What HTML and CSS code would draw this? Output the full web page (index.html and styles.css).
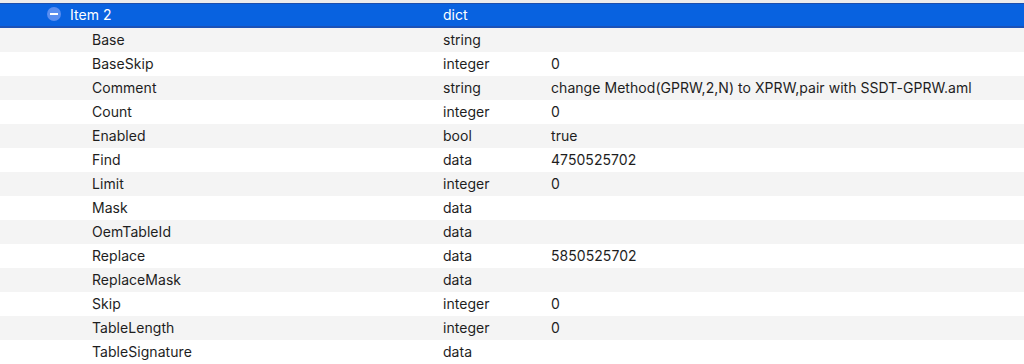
FILE: index.html
```html
<!DOCTYPE html>
<html lang="en">
<head>
    <meta charset="UTF-8">
    <title>Patch - Item 2</title>
    <link rel="stylesheet" href="styles.css">
</head>
<body>
    <div class="outline">
        <div class="row selected">
            <div class="key parent">
                <span class="toggle"></span>
                Item 2
            </div>
            <div class="type">dict</div>
            <div class="value"></div>
        </div>
        <div class="row"><div class="key">Base</div><div class="type">string</div><div class="value"></div></div>
        <div class="row"><div class="key">BaseSkip</div><div class="type">integer</div><div class="value">0</div></div>
        <div class="row"><div class="key">Comment</div><div class="type">string</div><div class="value">change Method(GPRW,2,N) to XPRW,pair with SSDT-GPRW.aml</div></div>
        <div class="row"><div class="key">Count</div><div class="type">integer</div><div class="value">0</div></div>
        <div class="row"><div class="key">Enabled</div><div class="type">bool</div><div class="value">true</div></div>
        <div class="row"><div class="key">Find</div><div class="type">data</div><div class="value">4750525702</div></div>
        <div class="row"><div class="key">Limit</div><div class="type">integer</div><div class="value">0</div></div>
        <div class="row"><div class="key">Mask</div><div class="type">data</div><div class="value"></div></div>
        <div class="row"><div class="key">OemTableId</div><div class="type">data</div><div class="value"></div></div>
        <div class="row"><div class="key">Replace</div><div class="type">data</div><div class="value">5850525702</div></div>
        <div class="row"><div class="key">ReplaceMask</div><div class="type">data</div><div class="value"></div></div>
        <div class="row"><div class="key">Skip</div><div class="type">integer</div><div class="value">0</div></div>
        <div class="row"><div class="key">TableLength</div><div class="type">integer</div><div class="value">0</div></div>
        <div class="row"><div class="key">TableSignature</div><div class="type">data</div><div class="value"></div></div>
    </div>
</body>
</html>
```

FILE: styles.css
```css
* {
    margin: 0;
    padding: 0;
    box-sizing: border-box;
}

body {
    font-family: 'Inter', 'Liberation Sans', sans-serif;
    font-size: 14px;
    letter-spacing: 0.05px;
    color: #1e1e1e;
    background: #ffffff;
    overflow: hidden;
}

.outline {
    border-top: 3px solid #ececec;
}

.row {
    display: grid;
    grid-template-columns: 443px 108px 1fr;
    align-items: center;
    height: 24px;
}

.row > div {
    padding-bottom: 2px;
}

.row:nth-child(even) {
    background: #f4f4f4;
}

.key {
    padding-left: 92px;
}

.key.parent {
    display: flex;
    align-items: center;
    gap: 9px;
    padding-left: 47px;
}

.selected {
    height: 25px;
    background: #0862e0;
    color: #ffffff;
    border-top: 1px solid #1c4fae;
    border-bottom: 2px solid #1b52b8;
}

.toggle {
    position: relative;
    width: 14px;
    height: 14px;
    border-radius: 50%;
    background: #5a8ef0;
}

.toggle::after {
    content: '';
    position: absolute;
    left: 3px;
    top: 6px;
    width: 8px;
    height: 2px;
    background: #ffffff;
}
```
